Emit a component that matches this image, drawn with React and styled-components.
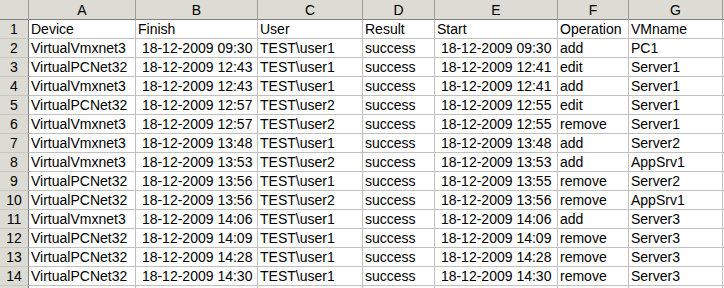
import React from "react";
import styled, { createGlobalStyle } from "styled-components";

const GlobalStyle = createGlobalStyle`
  html, body {
    margin: 0;
    padding: 0;
    background: #ffffff;
  }
`;

const columns = ["A", "B", "C", "D", "E", "F", "G"];
const widths = [29, 107, 122, 105, 72, 123, 71, 94];

const rows = [
  ["Device", "Finish", "User", "Result", "Start", "Operation", "VMname"],
  ["VirtualVmxnet3", " 18-12-2009 09:30", "TEST\\user1", "success", " 18-12-2009 09:30", "add", "PC1"],
  ["VirtualPCNet32", " 18-12-2009 12:43", "TEST\\user1", "success", " 18-12-2009 12:41", "edit", "Server1"],
  ["VirtualVmxnet3", " 18-12-2009 12:43", "TEST\\user1", "success", " 18-12-2009 12:41", "add", "Server1"],
  ["VirtualPCNet32", " 18-12-2009 12:57", "TEST\\user2", "success", " 18-12-2009 12:55", "edit", "Server1"],
  ["VirtualVmxnet3", " 18-12-2009 12:57", "TEST\\user2", "success", " 18-12-2009 12:55", "remove", "Server1"],
  ["VirtualVmxnet3", " 18-12-2009 13:48", "TEST\\user1", "success", " 18-12-2009 13:48", "add", "Server2"],
  ["VirtualVmxnet3", " 18-12-2009 13:53", "TEST\\user2", "success", " 18-12-2009 13:53", "add", "AppSrv1"],
  ["VirtualPCNet32", " 18-12-2009 13:56", "TEST\\user1", "success", " 18-12-2009 13:55", "remove", "Server2"],
  ["VirtualPCNet32", " 18-12-2009 13:56", "TEST\\user2", "success", " 18-12-2009 13:56", "remove", "AppSrv1"],
  ["VirtualVmxnet3", " 18-12-2009 14:06", "TEST\\user1", "success", " 18-12-2009 14:06", "add", "Server3"],
  ["VirtualPCNet32", " 18-12-2009 14:09", "TEST\\user1", "success", " 18-12-2009 14:09", "remove", "Server3"],
  ["VirtualPCNet32", " 18-12-2009 14:28", "TEST\\user1", "success", " 18-12-2009 14:28", "remove", "Server3"],
  ["VirtualPCNet32", " 18-12-2009 14:30", "TEST\\user1", "success", " 18-12-2009 14:30", "remove", "Server3"],
];

const Sheet = styled.div`
  display: grid;
  grid-template-columns: ${widths.map((w) => `${w}px`).join(" ")} 1fr;
  grid-auto-rows: 19px;
  grid-template-rows: 20px;
  width: 724px;
  height: 288px;
  overflow: hidden;
  font-family: "Liberation Sans", Arial, sans-serif;
  font-size: 14px;
  color: #000000;
`;

const HeadCell = styled.div`
  box-sizing: border-box;
  background: #dcdcd4;
  border-right: 1px solid #9d9d97;
  border-bottom: 1px solid #808080;
  display: flex;
  align-items: center;
  justify-content: center;
  line-height: 1;
`;

const RowHead = styled.div`
  box-sizing: border-box;
  background: #dcdcd4;
  border-right: 1px solid #808080;
  border-bottom: 1px solid #c8c8c0;
  display: flex;
  align-items: center;
  justify-content: center;
  line-height: 1;
`;

const Cell = styled.div`
  box-sizing: border-box;
  border-right: 1px solid #c0c0c0;
  border-bottom: 1px solid #c0c0c0;
  padding: 0 2px;
  display: flex;
  align-items: center;
  white-space: pre;
  overflow: hidden;
  line-height: 1;
`;

const Filler = styled.div`
  border-bottom: 1px solid ${(p) => (p.$head ? "#808080" : "#c0c0c0")};
  background: ${(p) => (p.$head ? "#dcdcd4" : "#ffffff")};
`;

export default function App() {
  return (
    <>
      <GlobalStyle />
      <Sheet>
        <HeadCell />
        {columns.map((c) => (
          <HeadCell key={c}>{c}</HeadCell>
        ))}
        <Filler $head />
        {rows.map((row, i) => (
          <React.Fragment key={i}>
            <RowHead>{i + 1}</RowHead>
            {row.map((v, j) => (
              <Cell key={j}>{v}</Cell>
            ))}
            <Filler />
          </React.Fragment>
        ))}
        <RowHead />
        {columns.map((c) => (
          <Cell key={c} />
        ))}
        <Filler />
      </Sheet>
    </>
  );
}
